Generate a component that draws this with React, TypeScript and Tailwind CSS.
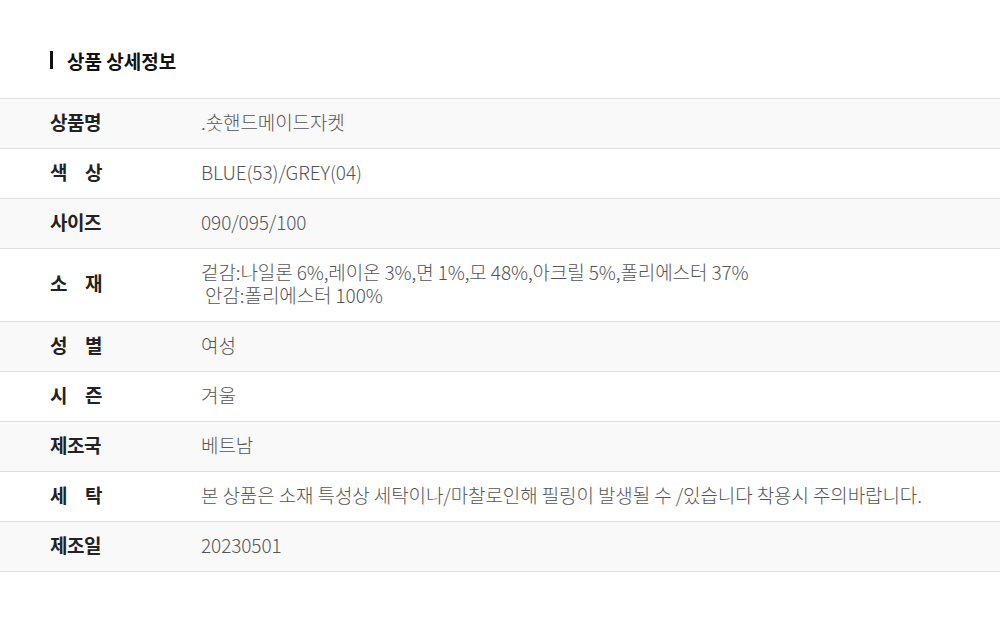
import React from "react";

type Row = { label: string[]; value: string[]; tall?: boolean };

const rows: Row[] = [
  { label: ["상품명"], value: [".숏핸드메이드자켓"] },
  { label: ["색", "상"], value: ["BLUE(53)/GREY(04)"] },
  { label: ["사이즈"], value: ["090/095/100"] },
  {
    label: ["소", "재"],
    value: ["겉감:나일론 6%,레이온 3%,면 1%,모 48%,아크릴 5%,폴리에스터 37%", " 안감:폴리에스터 100%"],
    tall: true,
  },
  { label: ["성", "별"], value: ["여성"] },
  { label: ["시", "즌"], value: ["겨울"] },
  { label: ["제조국"], value: ["베트남"] },
  { label: ["세", "탁"], value: ["본 상품은 소재 특성상 세탁이나/마찰로인해 필링이 발생될 수 /있습니다 착용시 주의바랍니다."] },
  { label: ["제조일"], value: ["20230501"] },
];

export default function App() {
  return (
    <div
      className="w-[1000px] h-[621px] bg-white pt-[51px]"
      style={{ fontFamily: '"Noto Sans CJK KR", "Noto Sans", sans-serif' }}
    >
      <div className="flex items-center pl-[50px] h-[18px] mb-[29px]">
        <div className="w-[3px] h-[18px] bg-[#111]" />
        <div className="ml-[14px] text-[19px] font-bold text-[#111] leading-none">상품 상세정보</div>
      </div>
      <div className="border-t border-[#dedede]">
        {rows.map((r, i) => (
          <div
            key={i}
            className={`flex items-center border-b border-[#dedede] pb-[4px] ${r.tall ? "h-[73px]" : "h-[50px]"} ${
              i % 2 === 0 ? "bg-[#f9f9f9]" : "bg-white"
            }`}
          >
            <div className="w-[201px] pl-[50px] shrink-0">
              <div className="w-[52px] flex justify-between text-[19px] font-bold text-[#222] leading-[22px] tracking-[-0.5px]">
                {r.label.map((c, j) => (
                  <span key={j}>{c}</span>
                ))}
              </div>
            </div>
            <div className="text-[19px] font-light text-[#555] leading-[23px] tracking-[-0.1px]">
              {r.value.map((v, j) => (
                <div key={j} className="whitespace-pre h-[23px]">
                  {v}
                </div>
              ))}
            </div>
          </div>
        ))}
      </div>
    </div>
  );
}
